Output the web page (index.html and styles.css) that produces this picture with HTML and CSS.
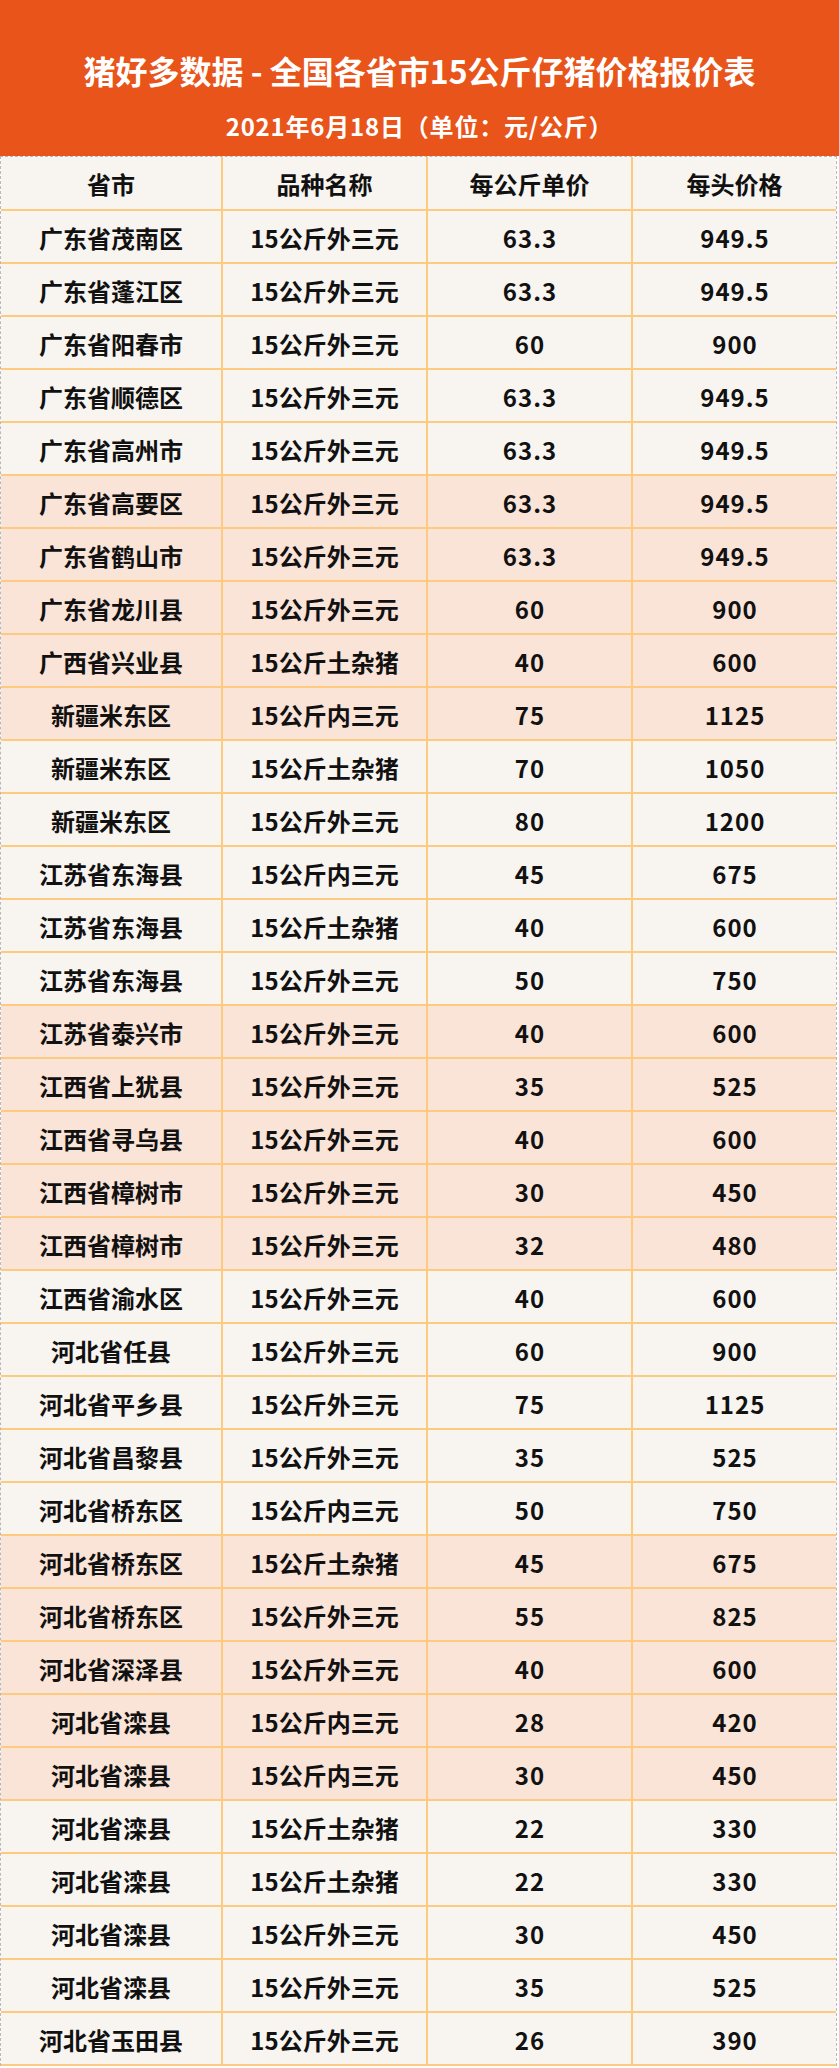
FILE: index.html
```html
<!DOCTYPE html>
<html lang="zh-CN">
<head>
<meta charset="utf-8">
<title>猪好多数据 - 全国各省市15公斤仔猪价格报价表</title>
<link rel="stylesheet" href="styles.css">
</head>
<body>
<div class="page">
  <header class="banner">
    <h1 class="title">猪好多数据 - 全国各省市15公斤仔猪价格报价表</h1>
    <p class="subtitle">2021年6月18日（单位：元/公斤）</p>
  </header>
  <div class="table">
    <div class="row head"><div class="cell">省市</div><div class="cell">品种名称</div><div class="cell">每公斤单价</div><div class="cell">每头价格</div></div>
    <div class="row"><div class="cell">广东省茂南区</div><div class="cell">15公斤外三元</div><div class="cell">63.3</div><div class="cell">949.5</div></div>
    <div class="row"><div class="cell">广东省蓬江区</div><div class="cell">15公斤外三元</div><div class="cell">63.3</div><div class="cell">949.5</div></div>
    <div class="row"><div class="cell">广东省阳春市</div><div class="cell">15公斤外三元</div><div class="cell">60</div><div class="cell">900</div></div>
    <div class="row"><div class="cell">广东省顺德区</div><div class="cell">15公斤外三元</div><div class="cell">63.3</div><div class="cell">949.5</div></div>
    <div class="row"><div class="cell">广东省高州市</div><div class="cell">15公斤外三元</div><div class="cell">63.3</div><div class="cell">949.5</div></div>
    <div class="row alt"><div class="cell">广东省高要区</div><div class="cell">15公斤外三元</div><div class="cell">63.3</div><div class="cell">949.5</div></div>
    <div class="row alt"><div class="cell">广东省鹤山市</div><div class="cell">15公斤外三元</div><div class="cell">63.3</div><div class="cell">949.5</div></div>
    <div class="row alt"><div class="cell">广东省龙川县</div><div class="cell">15公斤外三元</div><div class="cell">60</div><div class="cell">900</div></div>
    <div class="row alt"><div class="cell">广西省兴业县</div><div class="cell">15公斤土杂猪</div><div class="cell">40</div><div class="cell">600</div></div>
    <div class="row alt"><div class="cell">新疆米东区</div><div class="cell">15公斤内三元</div><div class="cell">75</div><div class="cell">1125</div></div>
    <div class="row"><div class="cell">新疆米东区</div><div class="cell">15公斤土杂猪</div><div class="cell">70</div><div class="cell">1050</div></div>
    <div class="row"><div class="cell">新疆米东区</div><div class="cell">15公斤外三元</div><div class="cell">80</div><div class="cell">1200</div></div>
    <div class="row"><div class="cell">江苏省东海县</div><div class="cell">15公斤内三元</div><div class="cell">45</div><div class="cell">675</div></div>
    <div class="row"><div class="cell">江苏省东海县</div><div class="cell">15公斤土杂猪</div><div class="cell">40</div><div class="cell">600</div></div>
    <div class="row"><div class="cell">江苏省东海县</div><div class="cell">15公斤外三元</div><div class="cell">50</div><div class="cell">750</div></div>
    <div class="row alt"><div class="cell">江苏省泰兴市</div><div class="cell">15公斤外三元</div><div class="cell">40</div><div class="cell">600</div></div>
    <div class="row alt"><div class="cell">江西省上犹县</div><div class="cell">15公斤外三元</div><div class="cell">35</div><div class="cell">525</div></div>
    <div class="row alt"><div class="cell">江西省寻乌县</div><div class="cell">15公斤外三元</div><div class="cell">40</div><div class="cell">600</div></div>
    <div class="row alt"><div class="cell">江西省樟树市</div><div class="cell">15公斤外三元</div><div class="cell">30</div><div class="cell">450</div></div>
    <div class="row alt"><div class="cell">江西省樟树市</div><div class="cell">15公斤外三元</div><div class="cell">32</div><div class="cell">480</div></div>
    <div class="row"><div class="cell">江西省渝水区</div><div class="cell">15公斤外三元</div><div class="cell">40</div><div class="cell">600</div></div>
    <div class="row"><div class="cell">河北省任县</div><div class="cell">15公斤外三元</div><div class="cell">60</div><div class="cell">900</div></div>
    <div class="row"><div class="cell">河北省平乡县</div><div class="cell">15公斤外三元</div><div class="cell">75</div><div class="cell">1125</div></div>
    <div class="row"><div class="cell">河北省昌黎县</div><div class="cell">15公斤外三元</div><div class="cell">35</div><div class="cell">525</div></div>
    <div class="row"><div class="cell">河北省桥东区</div><div class="cell">15公斤内三元</div><div class="cell">50</div><div class="cell">750</div></div>
    <div class="row alt"><div class="cell">河北省桥东区</div><div class="cell">15公斤土杂猪</div><div class="cell">45</div><div class="cell">675</div></div>
    <div class="row alt"><div class="cell">河北省桥东区</div><div class="cell">15公斤外三元</div><div class="cell">55</div><div class="cell">825</div></div>
    <div class="row alt"><div class="cell">河北省深泽县</div><div class="cell">15公斤外三元</div><div class="cell">40</div><div class="cell">600</div></div>
    <div class="row alt"><div class="cell">河北省滦县</div><div class="cell">15公斤内三元</div><div class="cell">28</div><div class="cell">420</div></div>
    <div class="row alt"><div class="cell">河北省滦县</div><div class="cell">15公斤内三元</div><div class="cell">30</div><div class="cell">450</div></div>
    <div class="row"><div class="cell">河北省滦县</div><div class="cell">15公斤土杂猪</div><div class="cell">22</div><div class="cell">330</div></div>
    <div class="row"><div class="cell">河北省滦县</div><div class="cell">15公斤土杂猪</div><div class="cell">22</div><div class="cell">330</div></div>
    <div class="row"><div class="cell">河北省滦县</div><div class="cell">15公斤外三元</div><div class="cell">30</div><div class="cell">450</div></div>
    <div class="row"><div class="cell">河北省滦县</div><div class="cell">15公斤外三元</div><div class="cell">35</div><div class="cell">525</div></div>
    <div class="row"><div class="cell">河北省玉田县</div><div class="cell">15公斤外三元</div><div class="cell">26</div><div class="cell">390</div></div>
  </div>
</div>
</body>
</html>
```

FILE: styles.css
```css
* { box-sizing: border-box; }
html, body {
  margin: 0;
  padding: 0;
  background: #ffffff;
}
body {
  font-family: "Noto Sans CJK SC", "Noto Sans", sans-serif;
  font-weight: 700;
  color: #111111;
}
.page {
  width: 839px;
}
.banner {
  height: 156px;
  background: #e8541a;
  color: #ffffff;
  text-align: center;
  padding-top: 50px;
}
.title {
  margin: 0;
  font-size: 32px;
  line-height: 40px;
  font-weight: 700;
}
.subtitle {
  margin: 21px 0 0;
  font-family: "Noto Sans CJK TC", "Noto Sans CJK SC", sans-serif;
  font-size: 24px;
  line-height: 30px;
  font-weight: 700;
  letter-spacing: 0.8px;
}
.table {
  width: 837px;
  border-top: 1px dashed #b9b9b9;
  border-left: 1px dashed #b9b9b9;
  border-right: 1px dashed #b9b9b9;
}
.row {
  display: grid;
  grid-template-columns: 222px 205px 205px 203px;
  height: 53px;
  background: #f8f4f0;
  border-bottom: 2px solid #fdca80;
}
.row.head {
  height: 54px;
}
.row.alt {
  background: #fae3d7;
}
.cell {
  display: flex;
  align-items: center;
  justify-content: center;
  font-size: 24px;
  line-height: 30px;
  padding-top: 2px;
  border-right: 2px solid #fdca80;
}
.cell:last-child {
  border-right: none;
}
.row:not(.head) .cell:nth-child(n+3) {
  letter-spacing: 1px;
  text-indent: 1px;
}
```
